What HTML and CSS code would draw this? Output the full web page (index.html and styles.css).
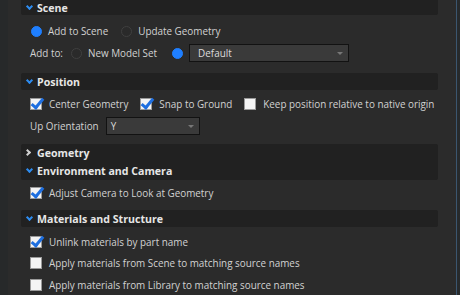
FILE: index.html
```html
<!DOCTYPE html>
<html>
<head>
<meta charset="utf-8">
<link rel="stylesheet" href="styles.css">
</head>
<body>
<div class="frame">
  <div class="gutter"></div>
  <div class="panel">
    <div class="hdr hdr-first"><span class="chev down"></span><span class="htitle">Scene</span></div>
    <div class="body scene">
      <div class="row">
        <label class="opt"><span class="radio on"></span>Add to Scene</label>
        <label class="opt"><span class="radio"></span>Update Geometry</label>
      </div>
      <div class="row">
        <span class="lbl">Add to:</span>
        <label class="opt"><span class="radio"></span>New Model Set</label>
        <span class="radio on solo"></span>
        <div class="select wide"><span>Default</span><span class="arrow"></span></div>
      </div>
    </div>

    <div class="hdr"><span class="chev down"></span><span class="htitle">Position</span></div>
    <div class="body pos">
      <div class="row">
        <label class="opt"><span class="check on"></span>Center Geometry</label>
        <label class="opt"><span class="check on"></span>Snap to Ground</label>
        <label class="opt"><span class="check"></span>Keep position relative to native origin</label>
      </div>
      <div class="row">
        <span class="lbl">Up Orientation</span>
        <div class="select narrow"><span>Y</span><span class="arrow"></span></div>
      </div>
    </div>

    <div class="hdrgroup">
      <div class="hdr hdr-g"><span class="chev right"></span><span class="htitle">Geometry</span></div>
      <div class="hdr hdr-g"><span class="chev down"></span><span class="htitle">Environment and Camera</span></div>
    </div>
    <div class="body env">
      <div class="row">
        <label class="opt"><span class="check on"></span>Adjust Camera to Look at Geometry</label>
      </div>
    </div>

    <div class="hdr"><span class="chev down"></span><span class="htitle">Materials and Structure</span></div>
    <div class="body mat">
      <div class="row"><label class="opt"><span class="check on"></span>Unlink materials by part name</label></div>
      <div class="row"><label class="opt"><span class="check"></span>Apply materials from Scene to matching source names</label></div>
      <div class="row"><label class="opt"><span class="check"></span>Apply materials from Library to matching source names</label></div>
    </div>
  </div>
  <div class="rside"></div>
</div>
</body>
</html>
```

FILE: styles.css
```css
* { box-sizing: border-box; }
html, body { margin: 0; padding: 0; background: #2b2b2b; }
body {
  width: 460px; height: 295px; overflow: hidden;
  font-family: "Open Sans", "DejaVu Sans", sans-serif;
  font-size: 9.9px; color: #d2d2d2;
}
.frame { display: flex; height: 295px; }
.gutter { width: 8px; background: #27292a; flex: none; margin-right: 13px; }
.panel { width: 417px; flex: none; }
.rside { flex: 1; margin-left: 17px; border-right: 3px solid #272a2c; box-shadow: inset -1px 0 0 #3b5670; }

.hdr {
  height: 17px; background: #212121; border-radius: 2px;
  display: flex; align-items: center; padding-left: 5px;
}
.hdr-first { height: 15px; border-radius: 0 0 2px 2px; }
.hdrgroup { background: #212121; border-radius: 2px; }
.hdr-g { height: 18px; background: transparent; }
.htitle { font-weight: 700; color: #e6e6e6; font-size: 10.6px; margin-left: 5px; }
.chev { width: 6px; height: 6px; display: inline-block; position: relative; }
.chev.down::before {
  content: ""; position: absolute; left: 1px; top: -1px; width: 3px; height: 3px;
  border-right: 2px solid #2d8cf0; border-bottom: 2px solid #2d8cf0; transform: rotate(45deg);
}
.chev.right::before {
  content: ""; position: absolute; left: -1px; top: 0px; width: 3px; height: 3px;
  border-right: 2px solid #cfcfcf; border-bottom: 2px solid #cfcfcf; transform: rotate(-45deg);
}

.body { padding-left: 9px; }
.body.scene { padding-top: 5px; padding-bottom: 9px; }
.body.pos { padding-top: 3px; padding-bottom: 7px; }
.body.env { padding-top: 2px; padding-bottom: 6px; }
.body.mat { padding-top: 4px; }
.row { display: flex; align-items: center; height: 22px; }
.mat .row { height: 21.5px; }
.opt { display: flex; align-items: center; margin-right: 12px; white-space: nowrap; }
.lbl { margin-right: 7px; white-space: nowrap; }

.radio {
  width: 11px; height: 11px; border-radius: 50%; flex: none;
  background: #2a2a2a; border: 1px solid #404040; margin: 0 6px 0 1px;
}
.radio.on { background: #1f7fff; border-color: #1f7fff; }
.radio.solo { margin: 0 6px 0 3px; }

.check {
  width: 12px; height: 12px; flex: none; position: relative;
  background: #f4f4f4; border: 1px solid #9a9a9a; margin: 0 7px 0 0;
}
.check.on::after {
  content: ""; position: absolute; left: 3px; top: -3px; width: 4px; height: 10px;
  border-right: 3px solid #1e6fe0; border-bottom: 3px solid #1e6fe0; transform: rotate(40deg);
}

.select {
  height: 18px; border: 1px solid #121212; background: #3a3a3a;
  display: flex; align-items: center; justify-content: space-between;
  padding: 0 5px 0 8px; color: #dcdcdc;
}
.select.wide { width: 160px; }
.select.narrow { width: 94px; padding-left: 4px; }
.arrow {
  width: 0; height: 0; border-left: 3px solid transparent; border-right: 3px solid transparent;
  border-top: 3px solid #777;
}
```
